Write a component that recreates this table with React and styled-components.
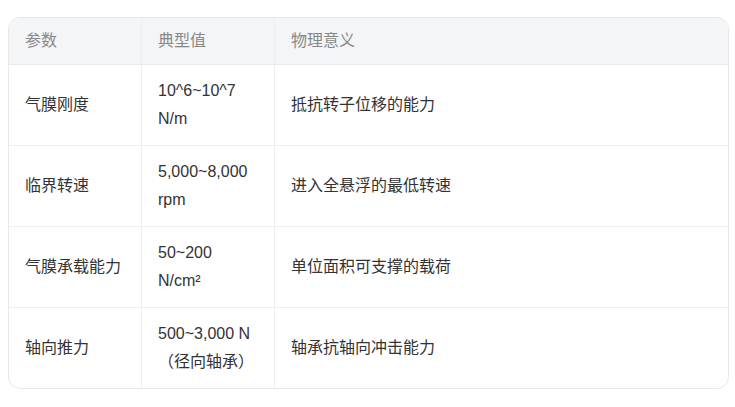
import React from "react";
import styled, { createGlobalStyle } from "styled-components";

const rows = [
  { name: "气膜刚度", value: "10^6~10^7 N/m", meaning: "抵抗转子位移的能力" },
  { name: "临界转速", value: "5,000~8,000 rpm", meaning: "进入全悬浮的最低转速" },
  { name: "气膜承载能力", value: "50~200 N/cm²", meaning: "单位面积可支撑的载荷" },
  { name: "轴向推力", value: "500~3,000 N（径向轴承）", meaning: "轴承抗轴向冲击能力" },
];

export default () => {
  return (
    <>
      <GlobalStyle />
      <Page>
        <TableWrap>
          <Table>
            <colgroup>
              <col style={{ width: 133 }} />
              <col style={{ width: 133 }} />
              <col />
            </colgroup>
            <thead>
              <tr>
                <HeadCell>参数</HeadCell>
                <HeadCell>典型值</HeadCell>
                <HeadCell>物理意义</HeadCell>
              </tr>
            </thead>
            <tbody>
              {rows.map(({ name, value, meaning }, index) => (
                <Row key={index}>
                  <Cell>{name}</Cell>
                  <Cell>{value}</Cell>
                  <Cell>{meaning}</Cell>
                </Row>
              ))}
            </tbody>
          </Table>
        </TableWrap>
      </Page>
    </>
  );
};

const GlobalStyle = createGlobalStyle`
  body {
    margin: 0;
    background: #ffffff;
    font-family: "Liberation Sans", "Noto Sans CJK SC", sans-serif;
  }
`;

const Page = styled.div`
  padding: 17px 6px 0 8px;
`;

const TableWrap = styled.div`
  border: 1px solid #e6e8eb;
  border-radius: 12px;
  overflow: hidden;
`;

const Table = styled.table`
  width: 100%;
  table-layout: fixed;
  border-collapse: separate;
  border-spacing: 0;
  font-size: 16px;
  line-height: 28px;
`;

const HeadCell = styled.th`
  background: #f4f5f7;
  color: #888888;
  font-weight: 400;
  text-align: left;
  padding: 9px 16px;
  border-bottom: 1px solid #e9eaec;
  border-right: 1px solid #eceef0;
  &:last-child {
    border-right: none;
  }
`;

const Row = styled.tr`
  &:last-child td {
    border-bottom: none;
  }
`;

const Cell = styled.td`
  color: #333333;
  padding: 12px 16px;
  vertical-align: middle;
  border-bottom: 1px solid #eeeeee;
  border-right: 1px solid #eeeeee;
  word-break: normal;
  &:last-child {
    border-right: none;
  }
`;
